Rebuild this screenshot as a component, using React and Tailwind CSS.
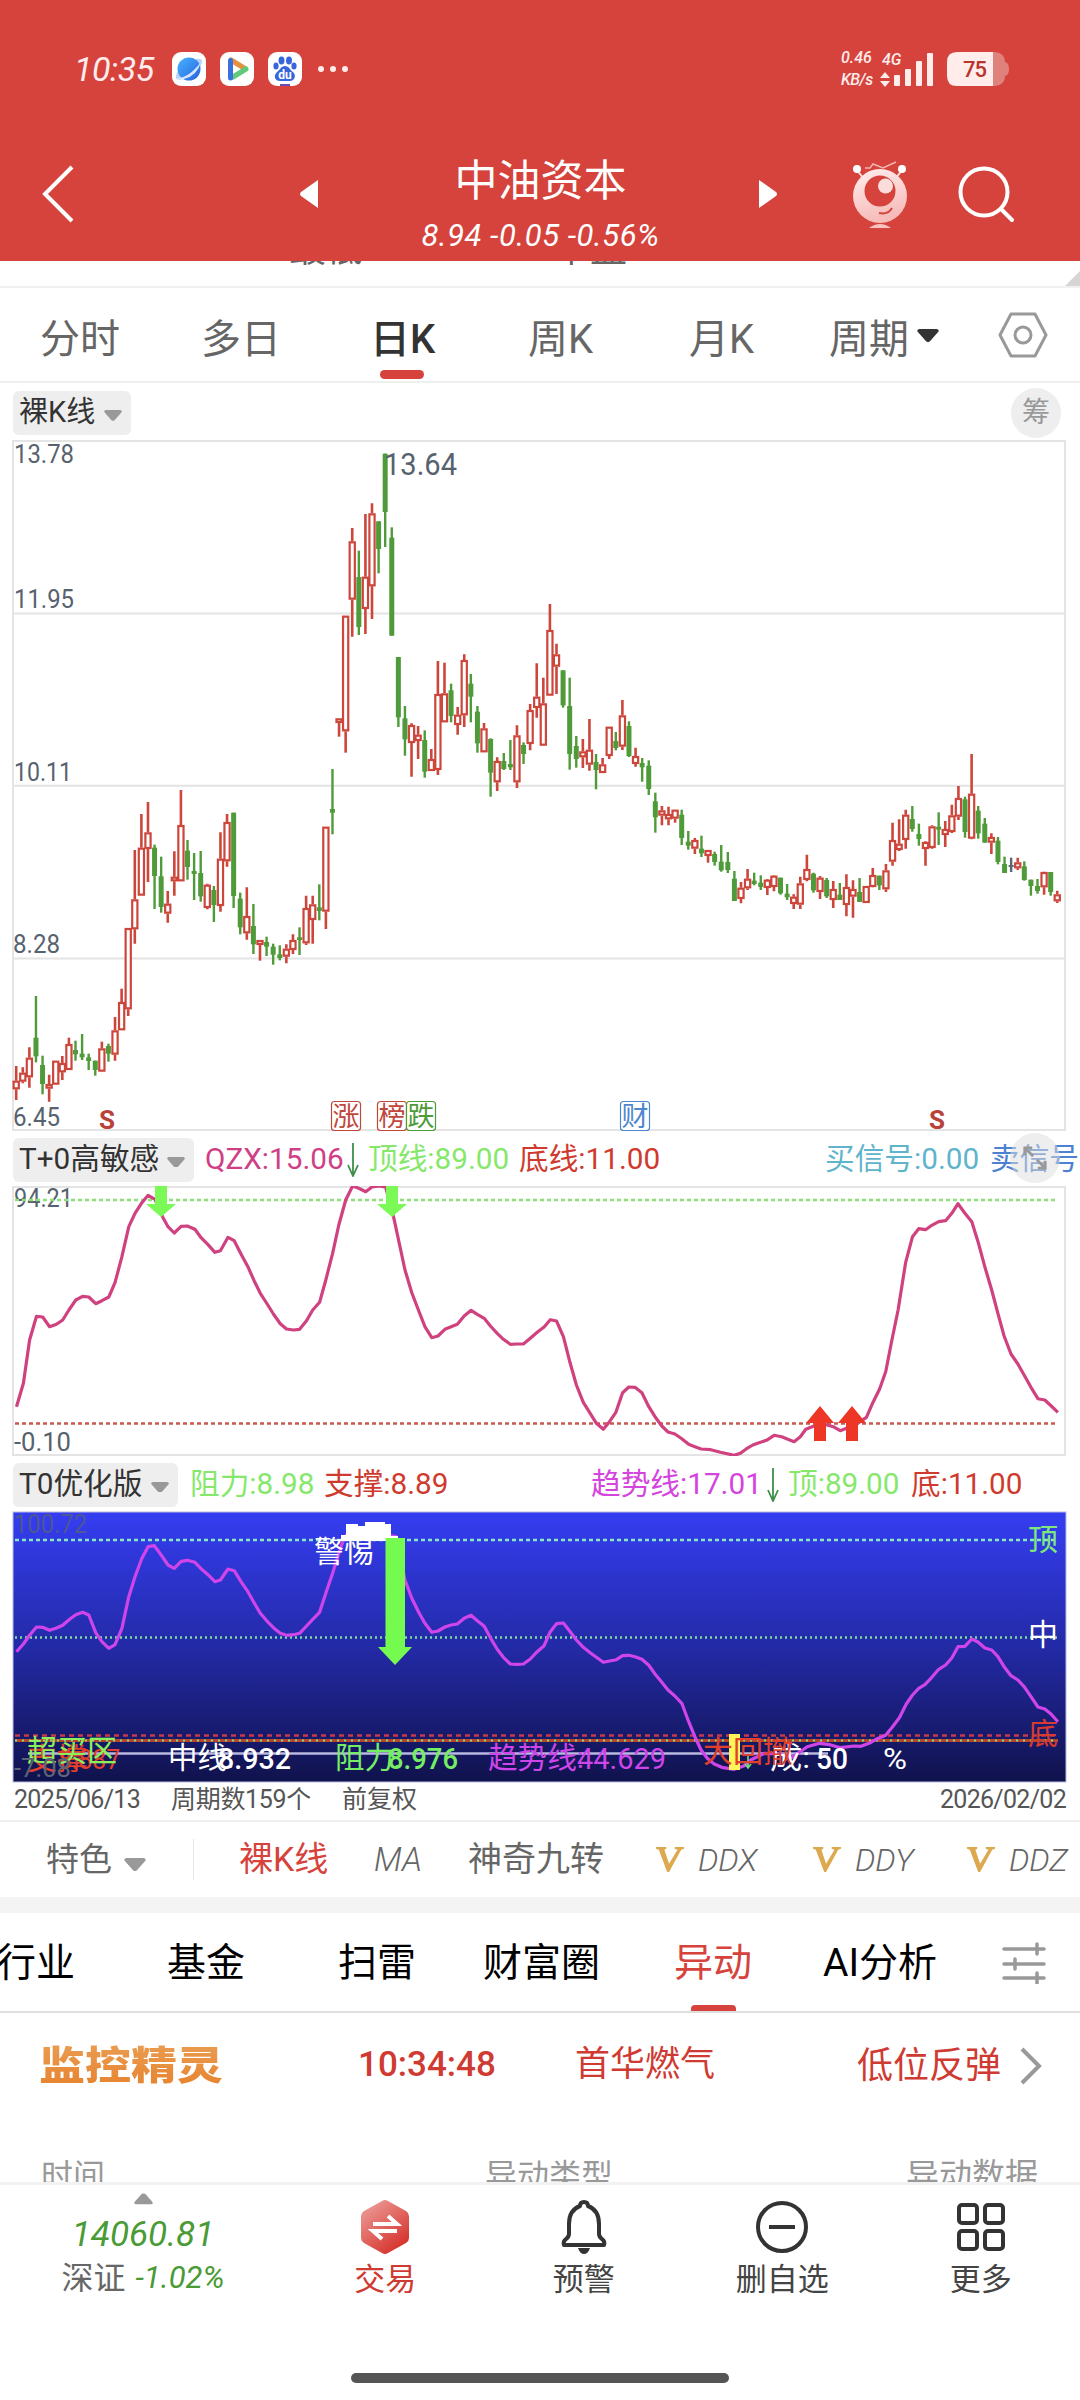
import React from "react";

// Every candle is "color high top bottom low". Values are thirds of a pixel below the group's base.
const candleGroups = [
  {
    base: 740,
    rows: `r 978 1022 1048 1080,r 982 998 1025 1030,r 922 953 1012 1043,g 768 893 949 967,g 947 975 1032 1063,
r 1004 1032 1046 1085,r 962 962 1034 1034,r 948 969 997 1020,r 893 912 990 990,g 902 930 943 962,
g 882 941 952 960,g 941 952 963 990,g 962 962 990 1007,r 905 925 995 995,g 911 918 941 965,
r 831 871 944 962,r 746 786 871 871,r 564 564 808 828,r 330 478 568 611,r 222 323 467 467,
r 186 277 327 426,g 314 323 408 507,g 350 409 501 518,r 453 491 521 548,r 334 410 424 467,
r 150 255 424 424,g 300 332 381 419,g 339 393 402 480,g 333 399 469 485,r 431 434 504 508,
g 438 450 495 546,r 277 356 498 515,r 222 246 364 380,g 218 218 468 504,g 458 476 562 583,
r 442 528 580 599,g 492 558 613 642,r 600 600 615 662,g 590 606 620 648,g 611 620 644 674,
g 616 643 654 661,r 613 626 650 670,r 583 600 630 642,g 562 592 600 645,r 467 504 610 615,
r 467 493 540 611,g 433 502 513 541,r 260 260 515 567,g 87 207 218 283`,
  },
  {
    base: 380,
    rows: `r 1015 1015 1029 1070,r 707 707 1054 1118,r 444 484 659 770,g 512 591 741 765,r 402 590 687 762,
r 370 400 619 717,g 424 424 507 580,g 221 221 396 501,g 442 473 767 767,g 831 831 1012 1041,
g 978 1015 1078 1127,r 1030 1035 1089 1190,r 1038 1064 1083 1137,g 1051 1080 1175 1193,r 1107 1137 1173 1173,
r 843 942 1170 1185,r 848 940 1027 1027,g 911 931 1008 1027,r 981 1004 1035 1064,r 823 840 1006 1041,
g 882 911 950 1027,g 978 995 1090 1118,r 1029 1045 1117 1117,g 1075 1077 1178 1250,r 1132 1143 1207 1233,
g 1119 1143 1167 1170,g 1080 1152 1162 1170,r 1036 1066 1207 1224,g 1087 1095 1122 1152,r 972 990 1092 1111,
r 850 950 984 1013`,
  },
  {
    base: 560,
    rows: `r 353 430 557 557,r 132 210 407 407,r 251 283 320 402,g 331 331 436 443,g 353 438 582 629,
g 528 558 597 623,r 537 574 592 624,r 477 569 614 632,g 582 606 630 688,r 594 613 639 639,
r 500 500 588 597,g 516 543 564 571,r 420 466 560 570,g 484 498 588 591,r 563 588 612 620,
g 594 609 622 665,g 601 617 687 705,g 698 724 772 818,r 738 751 767 796,r 740 762 778 796,
r 749 749 776 788,g 749 764 834 855,g 813 845 857 869,r 834 840 866 882,g 827 866 880 891,
r 870 870 888 908,g 875 882 906 917,g 855 905 931 935,g 876 906 930 939,g 933 956 1023 1023,
r 966 983 1017 1030,r 927 956 985 990,g 938 962 972 976,g 946 968 981 990,r 957 959 984 1005,
r 946 947 981 994,g 953 953 1000 1004,g 972 1001 1012 1020,r 1003 1010 1032 1047,r 950 970 1034 1047,
r 884 927 960 964,g 938 941 991 998,r 948 953 996 1017,g 954 960 1009 1014,r 963 987 1020 1044,
g 969 1004 1020 1020,r 943 981 1035 1069,r 961 987 1010 1073,g 954 996 1026 1026,r 978 978 1029 1029,
r 924 945 981 982,g 947 947 976 990,r 912 931 988 996,r 788 840 905 917,r 778 851 870 873,
r 749 764 840 866,g 738 777 807 815,g 791 822 837 857,r 844 846 867 917,r 796 799 864 866,
g 757 800 809 855,r 783 807 825 861,r 734 766 816 819,r 678 714 770 780,g 710 718 816 833,
r 582 701 836 838,g 738 752 820 836,g 774 791 848 848,r 820 831 848 882,g 831 842 906 913,
g 890 912 939 939,n 893 915 921 936,r 893 907 925 930,g 904 919 960 962,g 959 959 978 1007,
g 957 978 993 1001,r 935 936 982 1004,g 936 936 996 1007,r 992 1003 1024 1029`,
  },
];

const candles = candleGroups
  .flatMap(({ base, rows }) =>
    rows.split(",").map((row) => {
      const [color, ...values] = row.trim().split(" ");
      return [color, ...values.map((v) => base + Number(v) / 3)];
    })
  )
  .map(([color, high, top, bottom, low], i) => ({ color, high, top, bottom, low, x: 16.2 + i * 6.589 }));

const qzxLine = `24,950 34,880 43,750 53,679 62,681 72,710 82,703 91,690 100,660 110,630 120,619 129,621 139,641 148,632 158,621 167,578 177,500 187,410 196,370 206,338 215,316 225,328 236,380 244,410 253,429 263,409 272,408 283,418 292,443 302,464 312,487 320,482 331,442 340,452 350,492 360,530 369,572 378,610 388,642 397,672 407,701 416,717 426,720 435,718 445,692 454,660 464,637 473,570 483,490 492,405 502,330 512,288 521,295 531,305 540,291 551,288 560,292 572,385 588,540 598,608 608,662 617,710 627,743 636,738 646,718 655,710 664,703 674,678 684,661 693,673 703,685 712,708 722,730 731,748 741,763 750,762 760,762 770,745 780,727 790,711 799,689 808,693 818,740 828,820 837,885 847,937 857,970 866,1000 876,1018 885,995 894,968 904,908 913,891 922,892 932,908 942,950 951,980 961,1008 970,1026 980,1032 990,1046 1000,1063 1009,1070 1018,1077 1032,1079 1046,1087 1066,1096 1075,1090 1084,1076 1093,1065 1102,1058 1113,1051 1124,1036 1135,1040 1144,1048 1153,1055 1162,1040 1170,1018 1182,1008 1190,1000 1200,1004 1210,1010 1220,1022 1230,1014 1245,1000 1258,982 1268,935 1277,898 1286,845 1295,750 1304,660 1315,518 1325,440 1334,416 1344,419 1353,406 1363,395 1373,392 1382,370 1391,341 1401,370 1411,395 1420,455 1430,530 1440,600 1449,670 1458,738 1468,792 1478,822 1487,855 1497,892 1507,926 1517,930 1526,947 1536,967`;

const trendLine = `24,605 34,582 43,556 53,531 62,532 72,541 82,534 91,526 101,508 110,494 120,487 129,495 139,548 148,575 158,595 167,584 177,535 187,440 196,380 206,325 215,290 224,287 234,315 244,345 253,355 263,334 272,331 283,337 292,356 302,374 312,395 320,390 331,357 340,362 350,395 360,425 369,458 378,490 388,514 397,533 407,550 416,556 426,554 435,550 445,528 454,508 464,487 473,430 483,370 492,310 500,262 510,240 575,260 588,390 598,445 608,487 617,520 627,547 636,543 646,531 655,525 664,522 674,505 684,496 693,512 703,529 712,563 722,598 731,622 741,642 750,643 760,642 770,627 780,605 790,587 799,545 808,521 818,519 828,545 837,570 847,592 857,608 866,622 876,637 885,633 895,629 904,617 913,616 922,620 932,628 942,646 951,672 961,697 970,720 980,738 990,760 1000,815 1009,860 1018,900 1027,925 1037,942 1048,952 1066,958 1080,948 1090,930 1110,910 1130,912 1150,922 1162,905 1172,890 1190,880 1205,884 1220,893 1240,888 1250,889 1262,880 1272,868 1286,856 1296,830 1306,803 1316,762 1325,735 1334,715 1343,704 1353,682 1363,658 1373,645 1382,624 1391,590 1401,589 1411,567 1420,576 1430,594 1440,600 1449,620 1458,650 1468,677 1478,690 1487,710 1497,740 1507,771 1517,777 1526,792 1536,815`;

const toPoints = (line, base) =>
  line
    .split(" ")
    .map((p) => p.split(",").map(Number))
    .map(([x, y]) => `${(x / 1.452).toFixed(1)},${(base + y / 3).toFixed(1)}`)
    .join(" ");

const candleColors = { r: "#cd463c", g: "#4f9b3a", n: "#5b6673" };

// Chart label stretched to a known width
function Label({ x, y, w, size = 26, fill = "#56626e", weight = 400, children }) {
  return (
    <text x={x} y={y} textLength={w} lengthAdjust="spacingAndGlyphs" fontSize={size} fill={fill} fontWeight={weight}>
      {children}
    </text>
  );
}

function Candle({ color, high, top, bottom, low, x }) {
  const c = candleColors[color];
  if (color === "r") {
    const h = Math.max(bottom - top - 2, 2);
    return (
      <g stroke={c}>
        <path d={`M${x} ${high}V${top}M${x} ${bottom}V${low}`} strokeWidth="2.6" />
        <rect x={x - 2.6} y={top + 1} width="5.2" height={h} fill="#fff" strokeWidth="2.2" />
      </g>
    );
  }
  return (
    <g fill={c}>
      <rect x={x - 1.2} y={high} width="2.4" height={Math.max(low - high, 1)} />
      <rect x={x - 2.5} y={top} width="5" height={Math.max(bottom - top, 2)} />
    </g>
  );
}

function EventTag({ x, color, children }) {
  return (
    <g>
      <rect x={x} y="1101.5" width="29" height="29" rx="3" fill="#fff" stroke={color} strokeWidth="1.2" />
      <text x={x + 14.5} y="1125.5" textAnchor="middle" fontSize="27" fill={color}>
        {children}
      </text>
    </g>
  );
}

function DropTriangle({ className }) {
  return (
    <svg className={className} viewBox="0 0 20 12">
      <path d="M2 0h16q3 1 1 3l-7 8q-2 2-4 0L1 3Q-1 1 2 0z" fill="currentColor" />
    </svg>
  );
}

function IndicatorButton({ label, className }) {
  return (
    <button className={`flex h-[44px] shrink-0 items-center justify-between rounded-md bg-[#eee] pl-[6px] pr-[9px] text-[#333] ${className}`}>
      <span className="whitespace-nowrap">{label}</span>
      <DropTriangle className="mt-[5px] w-[18px] text-[#999]" />
    </button>
  );
}

function DownArrow() {
  return (
    <svg className="h-[34px] w-[12px] shrink-0" viewBox="0 0 12 34" fill="none" stroke="#3f8f4a" strokeWidth="1.8">
      <path d="M6 0V33M1 22l5 11 5-11" />
    </svg>
  );
}

function StatusBar() {
  return (
    <div className="mt-[52px] flex h-[34px] shrink-0 items-center text-[#ffeceb]">
      <span className="ml-[74px] w-[98px] text-[34px] italic tracking-[-0.500px]">10:35</span>
      <div className="flex gap-[14px]">
        <svg className="h-[34px] w-[34px]" viewBox="0 0 34 34">
          <defs>
            <linearGradient id="globe" x1="0" y1="0" x2="1" y2="1">
              <stop offset="0" stopColor="#45b4ff" />
              <stop offset="1" stopColor="#2a62dd" />
            </linearGradient>
          </defs>
          <rect width="34" height="34" rx="9" fill="#fff" />
          <path d="M4 27Q2 22 12 13 24 4 30 8 31 14 22 21 10 30 4 27z" fill="#b9d2fb" />
          <circle cx="17" cy="17" r="11.5" fill="url(#globe)" />
          <path d="M4 26Q16 27 29 10 25 24 12 27 6 28 4 26z" fill="#d6e6ff" />
        </svg>
        <svg className="h-[34px] w-[34px]" viewBox="0 0 34 34" fill="none" strokeWidth="5" strokeLinecap="round">
          <rect width="34" height="34" rx="9" fill="#fff" stroke="none" />
          <path d="M11 8l13 8" stroke="#e3913f" />
          <path d="M26 17L13 25" stroke="#5fca7a" />
          <path d="M10.5 8.500V26" stroke="#3b6fe0" />
        </svg>
        <svg className="h-[34px] w-[34px]" viewBox="0 0 34 34" fill="#3765db">
          <rect width="34" height="34" rx="9" fill="#fff" />
          <ellipse cx="13.500" cy="8.500" rx="3" ry="4" />
          <ellipse cx="21" cy="8.500" rx="3" ry="4" />
          <ellipse cx="8" cy="14" rx="2.600" ry="3.500" />
          <ellipse cx="26" cy="14" rx="2.600" ry="3.500" />
          <path d="M17 14c4 0 5 4 8 6 4 4 1 9-3 9H12c-5 0-7-5-3-9 3-2 4-6 8-6z" />
          <path d="M12 32h10v2H12z" fill="#6a4bb8" />
          <text x="17" y="27" textAnchor="middle" fontSize="12" fontWeight="700" fill="#fff">du</text>
        </svg>
      </div>
      <div className="ml-[16px] flex gap-[6px]">
        <i className="h-[6px] w-[6px] rounded-full bg-[#ffeceb]" />
        <i className="h-[6px] w-[6px] rounded-full bg-[#ffeceb]" />
        <i className="h-[6px] w-[6px] rounded-full bg-[#ffeceb]" />
      </div>
      <div className="ml-auto flex w-[38px] flex-col text-[16px] leading-[22px] font-medium italic">
        <span>0.46</span>
        <span className="tracking-[-0.500px]">KB/s</span>
      </div>
      <svg className="h-[40px] w-[58px]" viewBox="0 0 58 40" fill="#ffeceb">
        <text x="3" y="16" fontSize="16" fontStyle="italic" fontWeight="500">4G</text>
        <path d="M6 23l5 6H1zM6 38l5-6H1z" />
        <rect x="15" y="26" width="6" height="11" rx="1" />
        <rect x="26" y="20" width="6" height="17" rx="1" />
        <rect x="37" y="12" width="6" height="25" rx="1" />
        <rect x="48" y="4" width="6" height="33" rx="1" />
      </svg>
      <svg className="mr-[71px] ml-[10px] h-[34px] w-[62px]" viewBox="0 0 62 34">
        <path d="M10 0h38q10 1 10 10 4 1 4 7t-4 7q0 9-10 10H10Z" fill="#e0827c" />
        <path d="M10 0h36v34H10Q0 34 0 24V10Q0 0 10 0z" fill="#ffeceb" />
        <text x="16" y="25" fontSize="22" fontWeight="500" fill="#b8342c" textLength="24">75</text>
      </svg>
    </div>
  );
}

function Robot() {
  return (
    <svg className="mt-[1px] ml-[75px] h-[68px] w-[56px] shrink-0" viewBox="0 0 56 68" fill="none">
      <defs>
        <linearGradient id="bot" x1="0" y1="0" x2="0.300" y2="1">
          <stop offset="0" stopColor="#ffeeee" />
          <stop offset="1" stopColor="#f6bcb9" />
        </linearGradient>
      </defs>
      <path d="M4 8l8 10M51 8l-8 10" stroke="#fbe0df" strokeWidth="2" />
      <circle cx="5" cy="8" r="4" fill="#fff" />
      <circle cx="50" cy="8" r="4" fill="#fff" />
      <path d="M13 7h5l3-4 10 4 13-6" stroke="#f3b4b0" strokeWidth="1.500" />
      <circle cx="28" cy="35" r="27" fill="url(#bot)" />
      <circle cx="28" cy="30" r="15.500" fill="#d5433c" />
      <circle cx="33.500" cy="25" r="7.500" fill="#fbdedc" />
      <path d="M27 52q9 2 13-5" stroke="#d5433c" strokeWidth="2" />
      <path d="M17 67q11-8 22 0z" fill="#f6c3c0" />
    </svg>
  );
}

function Header() {
  return (
    <header className="flex h-[261px] shrink-0 flex-col bg-[#d5433c] text-white">
      <StatusBar />
      <div className="mt-[41px] flex h-[134px] items-center">
        <svg className="ml-[40px] h-[60px] w-[36px] shrink-0" viewBox="0 0 36 60" fill="none" stroke="#fff" strokeWidth="4">
          <path d="M32 3L5 30l27 27" />
        </svg>
        <svg className="ml-[224px] h-[28px] w-[18px] shrink-0" viewBox="0 0 18 28" fill="#fff">
          <path d="M18 0v28L1 16q-2-2 0-4z" />
        </svg>
        <div className="flex w-[441px] flex-col items-center gap-[7px] pt-[24px] pl-[4px]">
          <h1 className="text-[43px] leading-[52px]">中油资本</h1>
          <div className="text-[31px] leading-[44px] tracking-[0.500px] italic">8.94 -0.05 -0.56%</div>
        </div>
        <svg className="h-[28px] w-[18px] shrink-0" viewBox="0 0 18 28" fill="#fff">
          <path d="M0 0v28l17-12q2-2 0-4z" />
        </svg>
        <Robot />
        <svg className="ml-[50px] h-[60px] w-[60px] shrink-0" viewBox="0 0 60 60" fill="none" stroke="#fff" strokeWidth="4" strokeLinecap="round">
          <circle cx="26" cy="28" r="23.500" />
          <path d="M43 45l11 11" />
        </svg>
      </div>
    </header>
  );
}

function PeriodTabs() {
  return (
    <nav className="relative flex h-[95px] shrink-0 items-center border-b-2 border-[#efefef] pt-[11px] pl-[40px] text-[40px] text-[#666]">
      <span className="w-[161px]">分时</span>
      <span className="w-[169px]">多日</span>
      <span className="w-[158px] font-medium text-[#333]">日K</span>
      <span className="w-[161px]">周K</span>
      <span className="w-[140px]">月K</span>
      <span>周期</span>
      <DropTriangle className="-mt-[8px] ml-[8px] w-[22px] text-[#333]" />
      <svg className="-mt-[10px] ml-[59px] h-[46px] w-[50px]" viewBox="0 0 50 46" fill="none" stroke="#999" strokeWidth="3">
        <path d="M13 2h24l11 21-11 21H13L2 23z" strokeLinejoin="round" />
        <circle cx="25" cy="23" r="8" />
      </svg>
      <i className="absolute bottom-[2px] left-[380px] h-[9px] w-[44px] rounded-full bg-[#d5433c]" />
    </nav>
  );
}

function KChart() {
  return (
    <svg className="block h-[691px] w-full shrink-0" viewBox="0 440 1080 691">
      <g fill="none" stroke="#e4e4e4" strokeWidth="2">
        <rect x="13" y="441" width="1052" height="689" />
        <path d="M13 613.500H1065M13 785.700H1065M13 958.500H1065" />
      </g>
      {candles.map((c, i) => (
        <Candle key={i} {...c} />
      ))}
      <Label x="14" y="463" w="60">13.78</Label>
      <Label x="14" y="608" w="60">11.95</Label>
      <Label x="14" y="781" w="58">10.11</Label>
      <Label x="13" y="953" w="47">8.28</Label>
      <Label x="13" y="1126" w="47">6.45</Label>
      <Label x="384" y="475" w="73" size={31}>13.64</Label>
      <g fill="#b8423a" fontSize="26" fontWeight="700">
        <text x="99" y="1129">S</text>
        <text x="929" y="1129">S</text>
      </g>
      <EventTag x={331.500} color="#c0473e">涨</EventTag>
      <EventTag x={377.500} color="#c0473e">榜</EventTag>
      <EventTag x={406.500} color="#4f9b3a">跌</EventTag>
      <EventTag x={620.500} color="#4f86d0">财</EventTag>
    </svg>
  );
}

function SensitivityChart() {
  return (
    <svg className="block h-[270px] w-full shrink-0" viewBox="0 1186 1080 270">
      <rect x="13" y="1187" width="1052" height="268" fill="none" stroke="#e4e4e4" strokeWidth="2" />
      <Label x="14" y="1207" w="59">94.21</Label>
      <Label x="14" y="1451" w="57">-0.10</Label>
      <path d="M15 1200H1058" stroke="#8ee07a" strokeWidth="2.500" strokeDasharray="4 3" />
      <path d="M15 1423.500H1058" stroke="#c9594d" strokeWidth="2.500" strokeDasharray="4 3" />
      <polyline points={toPoints(qzxLine, 1090)} fill="none" stroke="#d0417f" strokeWidth="3.200" strokeLinejoin="round" />
      <g fill="#7af957">
        <path d="M155 1185h12v19h9l-15 13-15-13h9z" />
        <path d="M386 1185h12v19h9l-15 13-15-13h9z" />
      </g>
      <g fill="#ee3626">
        <path d="M814 1441h12v-18h8l-14-17-14 17h8z" />
        <path d="M846 1441h12v-18h8l-14-17-14 17h8z" />
      </g>
    </svg>
  );
}

function TrendChart() {
  return (
    <svg className="block h-[272px] w-full shrink-0" viewBox="0 1511 1080 272">
      <defs>
        <linearGradient id="night" x1="0" y1="0" x2="0" y2="1">
          <stop offset="0" stopColor="#353df2" />
          <stop offset="0.500" stopColor="#232aa6" />
          <stop offset="1" stopColor="#10124c" />
        </linearGradient>
      </defs>
      <rect x="13" y="1512" width="1053" height="270" fill="url(#night)" stroke="#b9bce0" strokeWidth="1" />
      <Label x="14" y="1533" w="73" fill="#4c5796">100.72</Label>
      <path d="M15 1540H1058" stroke="#8ce8c4" strokeWidth="2.500" strokeDasharray="4 3" />
      <path d="M15 1637.500H1058" stroke="#7fdca0" strokeWidth="2.500" strokeDasharray="2 3" />
      <path d="M15 1735.500H1058" stroke="#c8384a" strokeWidth="2.500" strokeDasharray="5 4" />
      <path d="M15 1740.500H1058" stroke="#b8452f" strokeWidth="3" />
      <path d="M15 1740.500H1058" stroke="#7fe07a" strokeWidth="2" strokeDasharray="2 5" />
      <path d="M28 1753.500H828" stroke="#b9b9e0" strokeWidth="2.500" />
      <polyline points={toPoints(trendLine, 1450)} fill="none" stroke="#cf45ea" strokeWidth="3.200" strokeLinejoin="round" />
      <path d="M341 1541v-6h5v-11h12v2h7v-4h20v2h6v12h7v5z" fill="#fff" />
      <Label x="314" y="1562" w="60" size={30} fill="#fff">警惕</Label>
      <path d="M385.500 1538H405v109h7l-17 18-17-18h7.500z" fill="#75fb50" />
      <Label x="1028" y="1550" w="30" size={30} fill="#7fe87a">顶</Label>
      <Label x="1028" y="1645" w="30" size={30} fill="#fff">中</Label>
      <Label x="1028" y="1744" w="30" size={30} fill="#d63a30">底</Label>
      <Label x="27" y="1769" w="60" size={30} fill="#e0402c">支撑</Label>
      <Label x="58" y="1769" w="62" size={28} fill="#e0402c">8.887</Label>
      <Label x="27" y="1761" w="90" size={30} fill="#8af05c">超买区</Label>
      <Label x="14" y="1777" w="57" fill="#5c6478">-7.08</Label>
      <Label x="168" y="1768" w="66" size={30} fill="#fff">中线:</Label>
      <Label x="218" y="1769" w="73" size={30} fill="#fff" weight={500}>8.932</Label>
      <Label x="335" y="1768" w="66" size={30} fill="#75ee63">阻力:</Label>
      <Label x="388" y="1769" w="70" size={30} fill="#75ee63" weight={500}>8.976</Label>
      <Label x="488" y="1768" w="96" size={30} fill="#cf45ea">趋势线:</Label>
      <Label x="577" y="1769" w="89" size={30} fill="#cf45ea">44.629</Label>
      <rect x="729" y="1734" width="11" height="36" fill="#fdf55a" />
      <path d="M748 1756v12m-3-4l3 4 3-4" stroke="#6fe07a" strokeWidth="1.600" fill="none" />
      <Label x="770" y="1768" w="40" size={30} fill="#fff">成:</Label>
      <Label x="816" y="1769" w="32" size={30} fill="#fff" weight={500}>50</Label>
      <Label x="883" y="1769" w="24" size={30} fill="#fff">%</Label>
      <Label x="703" y="1762" w="90" size={30} fill="#e0402c">大回撤</Label>
    </svg>
  );
}

function VipItem({ children, className }) {
  return (
    <div className={`flex shrink-0 items-center ${className}`}>
      <svg className="h-[27px] w-[28px]" viewBox="0 0 30 27">
        <path d="M0 0h11v2L9 3l5 15L23 3l-3-1V0h10v2l-3 1-13 24h-2L3 3 0 2z" fill="#dca94f" />
      </svg>
      <span className="ml-[14px] italic">{children}</span>
    </div>
  );
}

function FeatureBar() {
  return (
    <div className="flex h-[77px] shrink-0 items-center overflow-hidden border-t-2 border-[#eee] text-[33px] whitespace-nowrap text-[#666]">
      <span className="ml-[46px] w-[68px]">特色</span>
      <DropTriangle className="mt-[10px] ml-[10px] w-[22px] text-[#999]" />
      <i className="ml-[47px] h-[41px] w-px bg-[#e6e6e6]" />
      <span className="ml-[45px] w-[135px] text-[34px] text-[#d5433c]">裸K线</span>
      <span className="w-[94px] font-light italic">MA</span>
      <span className="w-[188px] text-[34px]">神奇九转</span>
      <VipItem className="w-[157px] text-[32px] font-light">DDX</VipItem>
      <VipItem className="w-[154px] text-[32px] font-light">DDY</VipItem>
      <VipItem className="text-[32px] font-light">DDZ</VipItem>
    </div>
  );
}

function NewsTabs() {
  return (
    <nav className="relative flex h-[100px] shrink-0 items-center overflow-hidden border-b-2 border-[#dedede] pt-[2px] text-[39px] whitespace-nowrap text-black">
      <span className="-ml-[3px] w-[170px] shrink-0">行业</span>
      <span className="w-[171px]">基金</span>
      <span className="w-[145px]">扫雷</span>
      <span className="w-[191px]">财富圈</span>
      <span className="w-[149px] text-[#d5433c]">异动</span>
      <span className="w-[179px]">AI分析</span>
      <svg className="h-[42px] w-[44px]" viewBox="0 0 44 42" stroke="#999" strokeWidth="3.500" strokeLinecap="round">
        <path d="M2 7h40M2 22h40M2 36h40M35 2v10M13 17v10M35 31v10" />
      </svg>
      <i className="absolute bottom-0 left-[691px] h-[6px] w-[45px] rounded-t-sm bg-[#d5433c]" />
    </nav>
  );
}

function AlertRow() {
  return (
    <div className="flex h-[105px] shrink-0 items-center text-[35px] whitespace-nowrap text-[#cf3a32]">
      <span className="ml-[39px] w-[319px] origin-left scale-y-85 bg-gradient-to-b from-[#eba055] to-[#e57f27] bg-clip-text text-[46px] font-black text-transparent">
        监控精灵
      </span>
      <span className="w-[217px] font-[Roboto] font-medium">10:34:48</span>
      <span className="w-[282px]">首华燃气</span>
      <span className="w-[163px] text-[36px]">低位反弹</span>
      <svg className="h-[38px] w-[22px]" viewBox="0 0 22 38" fill="none" stroke="#999" strokeWidth="4">
        <path d="M2 2l17 17L2 36" />
      </svg>
    </div>
  );
}

function NavItem({ label, color = "text-[#444]", children }) {
  return (
    <div className={`flex w-[198.5px] flex-col items-center pt-[14px] ${color}`}>
      <svg className="h-[56px] w-[56px]" viewBox="0 0 56 56" fill="none" stroke="#333" strokeWidth="4">
        {children}
      </svg>
      <span className="mt-[4px] text-[31px] leading-[42px]">{label}</span>
    </div>
  );
}

function BottomNav() {
  return (
    <footer className="flex h-[172px] shrink-0 border-t-[3px] border-[#f2f2f2]">
      <div className="flex w-[286px] flex-col items-center">
        <DropTriangle className="mt-[8px] w-[19px] rotate-180 text-[#999]" />
        <div className="mt-[9px] text-[35px] leading-[44px] italic text-[#4a9a35]">14060.81</div>
        <div className="flex text-[32px] leading-[42px] text-[#666]">
          深证<span className="ml-[10px] text-[31px] italic text-[#4a9a35]">-1.02%</span>
        </div>
      </div>
      <NavItem label="交易" color="text-[#cf3a32]">
        <defs>
          <linearGradient id="trade" x1="0" y1="0" x2="0.700" y2="1">
            <stop offset="0" stopColor="#efa6a2" />
            <stop offset="1" stopColor="#d5312a" />
          </linearGradient>
        </defs>
        <path d="M25 2q3-2 6 0l18 10q3 2 3 5v22q0 3-3 5L31 54q-3 2-6 0L7 44q-3-2-3-5V17q0-3 3-5z" fill="url(#trade)" stroke="none" />
        <path d="M16 25h24l-9-8M40 32H16l9 8" stroke="#fff" />
      </NavItem>
      <NavItem label="预警">
        <path d="M28 3q4 0 4 4 11 4 11 18v10q0 3 4 6 2 2 1 5H8q-1-3 1-5 4-3 4-6V25Q13 11 24 7q0-4 4-4z" strokeLinejoin="round" />
        <path d="M22 49h12q-2 6-6 6t-6-6z" fill="#333" stroke="none" />
      </NavItem>
      <NavItem label="删自选">
        <circle cx="28" cy="28" r="24" />
        <path d="M15 28h26" />
      </NavItem>
      <NavItem label="更多">
        <rect x="6" y="6" width="18" height="18" rx="3" />
        <rect x="32" y="6" width="18" height="18" rx="3" />
        <rect x="6" y="32" width="18" height="18" rx="3" />
        <rect x="32" y="32" width="18" height="18" rx="3" />
      </NavItem>
    </footer>
  );
}

export default function App() {
  return (
    <div className="flex h-[2400px] w-[1080px] flex-col overflow-hidden bg-white font-[Roboto,'Noto_Sans_CJK_SC',sans-serif]">
      <Header />

      {/* tail of the quote panel that scrolls under the header */}
      <div className="flex h-[27px] shrink-0 items-start overflow-hidden border-b-2 border-[#f0f0f0] text-[37px] leading-[48px] text-[#666]">
        <span className="-mt-[35px] ml-[289px] w-[264px]">最低</span>
        <span className="-mt-[35px]">市盈</span>
        <svg className="mt-[10px] ml-auto h-[17px] w-[17px]" viewBox="0 0 17 17">
          <path d="M17 0v17H0z" fill="#d5d5d5" />
        </svg>
      </div>

      <PeriodTabs />

      <div className="flex h-[57px] shrink-0 items-center justify-between pt-[3px] pr-[19px] pl-[13px] text-[29px]">
        <IndicatorButton className="w-[118px]" label="裸K线" />
        <span className="flex h-[50px] w-[50px] items-center justify-center rounded-full bg-[#eee] text-[28px] text-[#999]">筹</span>
      </div>
      <KChart />

      <div className="relative flex h-[55px] shrink-0 items-center overflow-hidden pt-[2px] pl-[13px] text-[29.7px] whitespace-nowrap">
        <IndicatorButton className="w-[181px]" label="T+0高敏感" />
        <span className="ml-[11px] w-[142px] text-[#cf3f86]">QZX:15.06</span>
        <DownArrow />
        <span className="ml-[9px] w-[151px] text-[#86e86b]">顶线:89.00</span>
        <span className="w-[306px] text-[#cf3a2e]">底线:11.00</span>
        <span className="w-[165px] text-[#5fb4cc]">买信号:0.00</span>
        <span className="text-[#4d82d2]">卖信号</span>
        <span className="absolute top-[2px] right-[20px] flex h-[50px] w-[50px] items-center justify-center rounded-full bg-[#dddddd]/50">
          <svg className="h-[26px] w-[26px]" viewBox="0 0 28 28" fill="none" stroke="#999" strokeWidth="3">
            <path d="M11 3H3v8M3 3l9 9M17 25h8v-8M25 25l-9-9" />
          </svg>
        </span>
      </div>
      <SensitivityChart />

      <div className="flex h-[55px] shrink-0 items-center pt-[2px] pl-[13px] text-[29.7px] whitespace-nowrap">
        <IndicatorButton className="w-[165px]" label="T0优化版" />
        <span className="ml-[12px] w-[134px] text-[#86e86b]">阻力:8.98</span>
        <span className="w-[267px] text-[#cf3a2e]">支撑:8.89</span>
        <span className="w-[176px] text-[#d445de]">趋势线:17.01</span>
        <DownArrow />
        <span className="ml-[9px] w-[123px] text-[#86e86b]">顶:89.00</span>
        <span className="text-[#cf3a2e]">底:11.00</span>
      </div>
      <TrendChart />

      <div className="flex h-[37px] shrink-0 items-center pr-[14px] pb-[4px] pl-[14px] text-[25px] text-[#555]">
        <span className="w-[157px] tracking-[-0.700px]">2025/06/13</span>
        <span className="w-[171px] tracking-[-0.300px]">周期数159个</span>
        <span>前复权</span>
        <span className="ml-auto tracking-[-0.700px]">2026/02/02</span>
      </div>

      <FeatureBar />
      <div className="h-[16px] shrink-0 bg-[#f4f4f4]" />
      <NewsTabs />
      <AlertRow />

      <div className="flex h-[64px] shrink-0 items-end overflow-hidden text-[32px] leading-[32px] whitespace-nowrap text-[#999]">
        <span className="-mb-[10px] ml-[41px] w-[444px]">时间</span>
        <span className="-mb-[10px] w-[421px]">异动类型</span>
        <span className="-mb-[10px] text-[33px]">异动数据</span>
      </div>
      <BottomNav />
      <div className="mt-[19px] ml-[351px] h-[10px] w-[378px] shrink-0 rounded-full bg-[#555]" />
    </div>
  );
}
